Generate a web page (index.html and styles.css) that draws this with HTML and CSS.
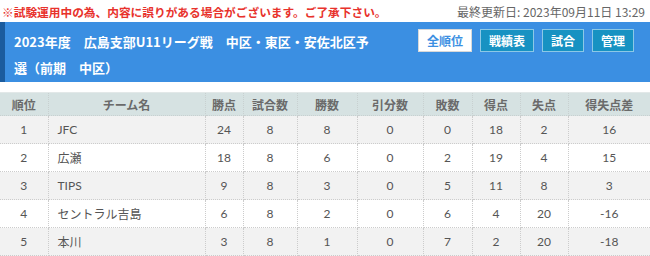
FILE: index.html
```html
<!DOCTYPE html>
<html lang="ja">
<head>
<meta charset="utf-8">
<link rel="stylesheet" href="styles.css">
</head>
<body>
<div class="topbar">
  <span class="notice">※試験運用中の為、内容に誤りがある場合がございます。ご了承下さい。</span>
  <span class="updated">最終更新日: 2023年09月11日 13:29</span>
</div>
<div class="header">
  <h1 class="title">2023年度　広島支部U11リーグ戦　中区・東区・安佐北区予選（前期　中区）</h1>
  <nav class="btns">
    <a class="btn active">全順位</a>
    <a class="btn">戦績表</a>
    <a class="btn">試合</a>
    <a class="btn">管理</a>
  </nav>
</div>
<table class="standings">
  <colgroup>
    <col class="c-rank"><col class="c-team"><col class="c-pts"><col class="c-gp"><col class="c-w"><col class="c-d"><col class="c-l"><col class="c-gf"><col class="c-ga"><col class="c-gd">
  </colgroup>
  <thead>
    <tr><th>順位</th><th>チーム名</th><th>勝点</th><th>試合数</th><th>勝数</th><th>引分数</th><th>敗数</th><th>得点</th><th>失点</th><th>得失点差</th></tr>
  </thead>
  <tbody>
    <tr><td>1</td><td class="team">JFC</td><td>24</td><td>8</td><td>8</td><td>0</td><td>0</td><td>18</td><td>2</td><td>16</td></tr>
    <tr><td>2</td><td class="team">広瀬</td><td>18</td><td>8</td><td>6</td><td>0</td><td>2</td><td>19</td><td>4</td><td>15</td></tr>
    <tr><td>3</td><td class="team">TIPS</td><td>9</td><td>8</td><td>3</td><td>0</td><td>5</td><td>11</td><td>8</td><td>3</td></tr>
    <tr><td>4</td><td class="team">セントラル吉島</td><td>6</td><td>8</td><td>2</td><td>0</td><td>6</td><td>4</td><td>20</td><td>-16</td></tr>
    <tr><td>5</td><td class="team">本川</td><td>3</td><td>8</td><td>1</td><td>0</td><td>7</td><td>2</td><td>20</td><td>-18</td></tr>
  </tbody>
</table>
</body>
</html>
```
FILE: styles.css
```css
* { box-sizing: border-box; }
html, body { margin: 0; padding: 0; background: #fff; }
body { font-family: "Noto Sans CJK JP", "Noto Sans", sans-serif; width: 650px; }

.topbar {
  height: 22px;
  display: flex;
  justify-content: space-between;
  align-items: center;
  padding: 0 5px 0 2px;
}
.notice { color: #e8322c; font-weight: bold; font-size: 11.7px; }
.updated { color: #666; font-size: 12px; }

.header {
  height: 60px;
  background: #3b8fe2;
  border-left: 5px solid #1b5c9e;
  display: flex;
  justify-content: space-between;
  align-items: flex-start;
  padding: 7px 16px 0 9px;
}
.title {
  margin: 0;
  width: 366px;
  flex: none;
  color: #fff;
  font-size: 13px;
  font-weight: bold;
  line-height: 26px;
}
.btns { display: flex; gap: 8px; }
.btn {
  display: block;
  height: 23px;
  line-height: 21px;
  padding: 0 8px;
  font-size: 12px;
  font-weight: bold;
  color: #fff;
  background: #1792c2;
  border: 1px solid #8cc8e6;
}
.btn.active { background: #fff; color: #3b8fe2; border-color: #d8d8d8; }

.standings {
  margin-top: 10px;
  width: 650px;
  border-collapse: collapse;
  table-layout: fixed;
  font-family: Lato, "Noto Sans CJK JP", sans-serif;
  font-size: 12px;
  color: #555;
}
.c-rank { width: 48px; }
.c-team { width: 157px; }
.c-pts { width: 38px; }
.c-gp { width: 54px; }
.c-w { width: 60px; }
.c-d { width: 66px; }
.c-l { width: 49px; }
.c-gf { width: 48px; }
.c-ga { width: 48px; }
.c-gd { width: 82px; }

.standings th {
  height: 23px;
  background: #d6e2e2;
  color: #6a6a6a;
  font-weight: bold;
  border: 1px dotted #c8d0d0;
  border-top: 1px solid #e2e8e8;
  padding: 0;
  font-family: "Noto Sans CJK JP", sans-serif;
}
.standings td {
  height: 28px;
  text-align: center;
  padding: 0;
  border: 1px dotted #cccccc;
}
.standings th:first-child, .standings td:first-child { border-left: none; }
.standings th:last-child, .standings td:last-child { border-right: none; }
.standings td.team { text-align: left; padding-left: 9px; }
.standings tbody tr:nth-child(odd) td { background: #f2f2f2; }
.standings tbody tr:nth-child(even) td { background: #fff; }
```
